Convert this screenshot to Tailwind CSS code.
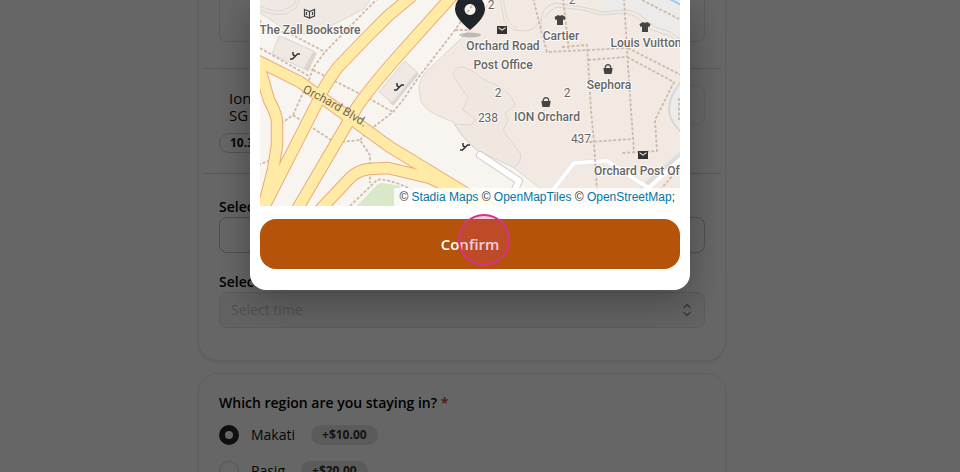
<!DOCTYPE html>
<html lang="en">
<head>
    <meta charset="UTF-8">
    <meta name="viewport" content="width=device-width, initial-scale=1.0">
    <title>Booking - Confirm Location</title>
    <script src="https://cdn.jsdelivr.net/npm/@tailwindcss/browser@4"></script>
</head>
<body class="bg-white text-[#111] font-['Open_Sans','Noto_Sans',sans-serif]">
    <!-- Booking form -->
    <main class="h-screen overflow-hidden pl-3 pr-12">
        <div class="max-w-[528px] mx-auto flex flex-col gap-3">
            <section class="border border-t-0 border-[#ededed] rounded-b-[20px] px-5 pb-8 shadow-sm">
                <div class="h-[42px] border border-t-0 border-[#e4e4e4] rounded-b-lg"></div>
                <div class="-mx-4 mt-[26px] border-t border-[#d8d8d8]"></div>

                <div class="mt-4 flex items-center justify-between">
                    <p class="pl-2.5 pt-1 text-[15px] leading-[17px]">Ion Orchard<br>SG</p>
                    <button type="button" aria-label="Edit address" class="h-10 w-24 border border-[#ebebeb] rounded-lg text-sm"></button>
                </div>
                <span class="mt-2 inline-flex h-5 items-center px-2.5 border border-[#cfcfcf] rounded-full text-[12px] font-bold">10.3 km</span>
                <div class="-mx-4 mt-5 border-t border-[#d8d8d8]"></div>

                <label for="date" class="block mt-[19px] pt-1 text-sm leading-5 font-semibold text-black">Select date</label>
                <input id="date" type="text" class="block w-full h-9 px-3 border border-[#c4c4c4] rounded-lg text-sm">

                <label for="time" class="block mt-[19px] text-sm leading-5 font-semibold text-black">Select time</label>
                <div class="relative">
                    <select id="time" disabled class="block w-full h-9 px-[11px] appearance-none bg-[#f5f5f5] border border-[#e2e2e2] rounded-lg text-sm text-[#c4c8cc] opacity-100">
                        <option>Select time</option>
                    </select>
                    <svg class="absolute right-3 top-2.5 w-3 h-4" viewBox="0 0 12 16" fill="none" stroke="#8f8f8f" stroke-width="1.5" stroke-linecap="round" stroke-linejoin="round">
                        <path d="M3 5.500 6 2.500 9 5.500M3 10.500 6 13.500 9 10.500"/>
                    </svg>
                </div>
            </section>

            <section class="border border-[#ededed] rounded-[20px] px-5 pt-[18px] pb-8 shadow-sm">
                <fieldset class="flex flex-col gap-3.5">
                    <legend class="mb-2.5 text-sm leading-[22px] font-semibold text-black">Which region are you staying in? <span class="text-[#e03131]">*</span></legend>
                    <div class="flex items-center gap-3">
                        <input id="makati" type="radio" name="region" checked class="appearance-none size-5 rounded-full border border-[#ced4da] checked:border-[6px] checked:border-[#25262b]">
                        <label for="makati" class="flex items-center gap-4 text-sm leading-[22px]">Makati
                            <span class="flex h-5 items-center px-[11px] bg-[#e3e3e3] rounded-full text-[12px] font-bold text-[#333]">+$10.00</span>
                        </label>
                    </div>
                    <div class="flex items-center gap-3">
                        <input id="pasig" type="radio" name="region" class="appearance-none size-5 rounded-full border border-[#ced4da] checked:border-[6px] checked:border-[#25262b]">
                        <label for="pasig" class="flex items-center gap-4 text-sm leading-[22px]">Pasig
                            <span class="flex h-5 items-center px-[11px] bg-[#e3e3e3] rounded-full text-[12px] font-bold text-[#333]">+$20.00</span>
                        </label>
                    </div>
                </fieldset>
            </section>
        </div>
    </main>

    <!-- Location modal -->
    <div class="fixed inset-0 bg-black/60 flex items-start justify-center pr-5">
        <div role="dialog" aria-label="Confirm location" class="relative w-full max-w-[440px] bg-white rounded-b-2xl px-2.5 pb-[21px] shadow-[0_10px_36px_rgba(0,0,0,0.32)]">
            <div class="relative">
                <svg class="block w-full h-[206px]" viewBox="260 0 420 206" preserveAspectRatio="xMidYMid slice" font-family="Roboto, sans-serif">
                    <defs>
                        <g id="stairs" fill="none" stroke="#333" stroke-width="1.5">
                            <path d="M-5 4h2.500l5-5H5M-2-3v3M-2 0l2 1"/>
                        </g>
                        <path id="mail" fill="#333" fill-rule="evenodd" d="M-5-4H5V4H-5zM-3.500-3 0-.5 3.500-3V-1.800L0 .8-3.500-1.800z"/>
                        <path id="shirt" fill="#444" d="M-2-5Q0-3.500 2-5L5.500-3 4.500 0 3-.5V5H-3V-.5L-4.500 0-5.500-3z"/>
                        <path id="basket" fill="#444" fill-rule="evenodd" d="M-4.500-1H-3.500Q-3-5 0-5T3.500-1H4.500V.5L3.500 5H-3.500L-4.500.5zM-2.300-1H2.300Q2-3.800 0-3.800T-2.300-1z"/>
                        <path id="blvd" d="M302 92 320 101Q345 115 380 137"/>
                    </defs>
                    <rect x="200" y="-50" width="560" height="306" fill="#f8f4f0"/>

                    <!-- buildings -->
                    <g stroke="#ddd8d2">
                        <path fill="#f0e8e2" d="M258-2V12Q275 22 284 29 296 36 317 33L364 9 371-2z"/>
                        <path fill="none" d="M260 10Q276 16 286 14L296 8 300-2M260 6Q275 13 284 10L294 5 297-2"/>
                        <path fill="#dcd6d1" stroke="none" d="M284 37 317 53 308 72 304 69z"/>
                        <path fill="#f0e8e2" d="M279 36 314 51 304 69 272 54z"/>
                        <path fill="#dcd6d1" stroke="none" d="M405 61 419 74 393 106 389 102z"/>
                        <path fill="#f0e8e2" d="M405 61 417 72 392 103 379 92z"/>
                        <path fill="#f2e9e2" d="M492-2 470 30 425 73Q419 80 419 90L421 102Q428 112 439 116L453 122 460 133Q468 144 478 151L513 167 541 189 555 210H690V-2z"/>
                        <path fill="#ecebe9" d="M602 12 625 10Q635 10 644 18L655 27 670 32 682 40V-4H602z" stroke="none"/>
                        <path fill="none" stroke="#d8d6d3" d="M541 28 542 15Q545 5 555 3L583 7 602 12 625 10Q635 10 644 18L655 27 670 32 682 40"/>
                        <path fill="none" stroke="#d8d6d3" d="M545 18Q549 9 558 7L583 10 600 15 624 13Q633 13 642 22L652 30 670 36 682 44"/>
                        <path fill="none" d="M500-2 504 20Q507 28 515 30L525 31Q536 31 541 18M503-2 507 18Q510 26 517 28"/>
                        <path fill="#f0e7e0" d="M453 75Q454 66 464 67L474 72Q482 80 496 85 513 94 515 106L505 113 508 120 503 130 520 153Q523 163 513 167L478 151 460 133 455 124 471 125 476 120 463 110 468 97 461 88Z"/>
                        <path fill="#ecebe9" stroke="#d9d7d5" stroke-width="2" d="M682 80Q670 95 669 108 668 120 682 133z"/>
                    </g>
                    <path fill="#d8e8c8" d="M357 206 377 185Q379 183 383 183L400 186V208z"/>
                    <path fill="none" stroke="#a0c8f0" stroke-width="2" d="M668-2 681 5"/>

                    <!-- service roads -->
                    <g fill="none" stroke-linejoin="round" stroke-linecap="round">
                        <path stroke="#ddd" stroke-width="5" d="M553 190 574 163 607 161 650 189M639 191 682 153"/>
                        <path stroke="#fff" stroke-width="4" d="M553 190 574 163 607 161 650 189M645 191 682 158"/>
                        <path stroke="#cfcdcb" stroke-width="8" d="M480 155 519 181 511 198"/>
                        <path stroke="#fff" stroke-width="6" d="M480 155 519 181 511 198"/>
                    </g>

                    <!-- footpaths -->
                    <path fill="none" stroke="#cdbbab" stroke-width="1.800" stroke-dasharray="3 1.800" d="M378-2 325 52 313 68 309 80 302 95 293 115 282 123M293 115 331 140M342 142 360 140 370 155V183M360 140 367 132 393 112 403 100 418 78 455 30 474 3M455 30H470M313 70 370 99 393 112M260 20 262 29 289 33 325 52M260 48 309 76M350 206 377 180 Q385 177 413 190M258 165 268 161M563-2 569 51M533-2 541 30 547 52 628 48M562 47 587 45 588 60 591 110 594 142 597 190M588 60 627 57M624-2 627 50 631 110 634 152M628 48 681 75M627 57 674 82 655 120 657 151 622 153M575 143 632 139M638-2 681 20M681 166 661 189M679 98V120"/>

                    <!-- main roads -->
                    <g fill="none" stroke-linejoin="round">
                        <g stroke="#e9ac77" stroke-width="12.500">
                            <path d="M256 60 300 82 390 147 492 209"/>
                            <path d="M261 213 317 103Q323 87 338 67L367 37 388 16 412-4"/>
                            <path d="M295 213 357 107Q368 91 386 70L400 54 453-5"/>
                            <path d="M259 66 269 100Q277 115 277 122V145L273 170 262 213"/>
                            <path d="M317 213 350 178Q358 170 370 169L388 168 430 178 462 193"/>
                        </g>
                        <g stroke="#ffeba6" stroke-width="10.500">
                            <path d="M256 60 300 82 390 147 492 209"/>
                            <path d="M261 213 317 103Q323 87 338 67L367 37 388 16 412-4"/>
                            <path d="M295 213 357 107Q368 91 386 70L400 54 453-5"/>
                            <path d="M259 66 269 100Q277 115 277 122V145L273 170 262 213"/>
                            <path d="M317 213 350 178Q358 170 370 169L388 168 430 178 462 193"/>
                        </g>
                    </g>

                    <!-- points of interest -->
                    <path fill="none" stroke="#444" stroke-width="1.200" d="M304.500 9.500 309.500 11.500 314.500 9.500V16L309.500 18 304.500 16zM309.500 11.500V18M306.500 12v3M312.500 12v3"/>
                    <use href="#stairs" x="295" y="55"/>
                    <use href="#stairs" x="399" y="86"/>
                    <use href="#stairs" x="465" y="146"/>
                    <use href="#mail" x="502" y="30"/>
                    <use href="#mail" x="643" y="155"/>
                    <use href="#shirt" x="560" y="20"/>
                    <use href="#shirt" x="645" y="27"/>
                    <use href="#basket" x="608" y="69"/>
                    <use href="#basket" x="546" y="102"/>
                    <g fill="#666" stroke="#fff" stroke-width="2" stroke-opacity=".8" paint-order="stroke" font-size="12" text-anchor="middle">
                        <g font-weight="500">
                            <text x="310" y="34">The Zall Bookstore</text>
                            <text x="503" y="50">Orchard Road</text>
                            <text x="503" y="69">Post Office</text>
                            <text x="561" y="40">Cartier</text>
                            <text x="646" y="47">Louis Vuitton</text>
                            <text x="609" y="89">Sephora</text>
                            <text x="547" y="121">ION Orchard</text>
                            <text x="594" y="175" text-anchor="start">Orchard Post Off</text>
                        </g>
                        <text x="491" y="9">2</text>
                        <text x="572" y="4">2</text>
                        <text x="498" y="97">2</text>
                        <text x="567" y="97">2</text>
                        <text x="488" y="122">238</text>
                        <text x="581" y="143">437</text>
                    </g>
                    <text fill="#765" font-size="12"><textPath href="#blvd">Orchard Blvd.</textPath></text>

                    <!-- marker -->
                    <ellipse cx="470" cy="35" rx="11" ry="2.500" fill="#000" opacity=".2"/>
                    <path fill="#212529" fill-rule="evenodd" d="M470 30Q455 18 455 9A15 15 0 0 1 485 9Q485 18 470 30zM470 4a5.500 5.500 0 1 0 .1 0z"/>
                </svg>
                <p class="absolute right-0 bottom-0 bg-white/80 px-[5px] text-[12px] leading-[18px] text-[#333] whitespace-nowrap font-['Liberation_Sans',sans-serif]">&copy; <a href="#" class="text-[#0078a8]">Stadia Maps</a> &copy; <a href="#" class="text-[#0078a8]">OpenMapTiles</a> &copy; <a href="#" class="text-[#0078a8]">OpenStreetMap</a>;</p>
            </div>
            <button type="button" class="mt-[13px] block w-full h-[50px] bg-[#b45309] rounded-2xl text-[15px] font-semibold text-white">Confirm</button>
            <span class="absolute left-[208px] bottom-6 size-[52px] rounded-full border-2 border-[#d63384] bg-[#d63384]/25"></span>
        </div>
    </div>
</body>
</html>
